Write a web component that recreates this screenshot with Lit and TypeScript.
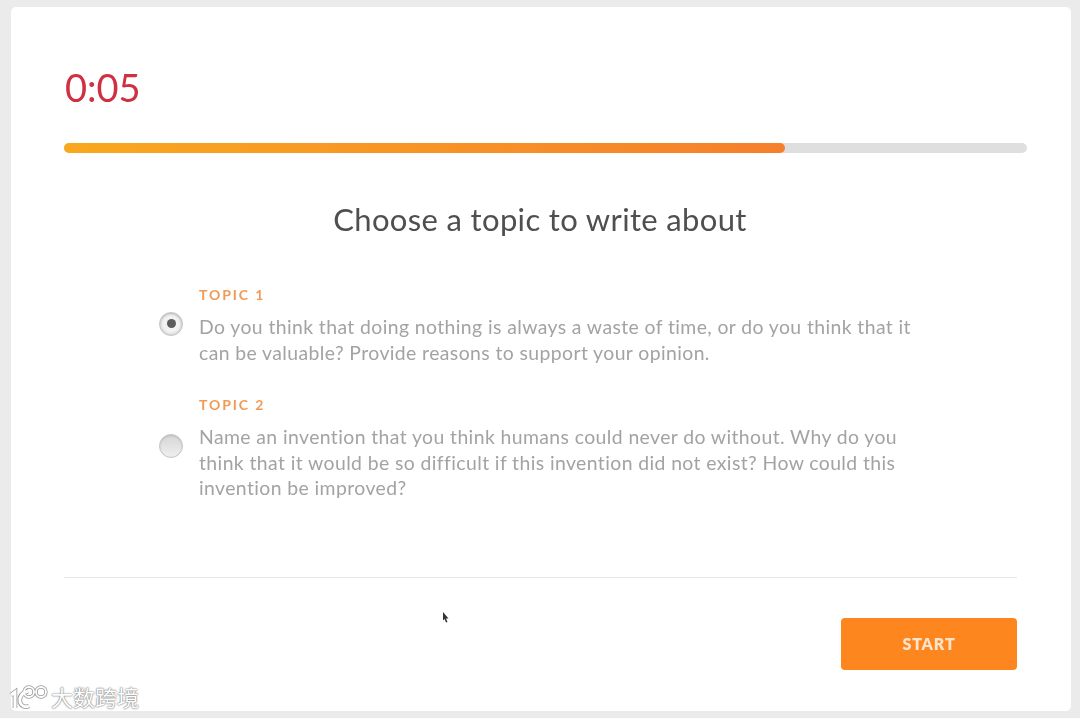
import { LitElement, html, css } from "lit";
import { customElement, property } from "lit/decorators.js";

const topics = [
	{
		label: "TOPIC 1",
		text: "Do you think that doing nothing is always a waste of time, or do you think that it can be valuable? Provide reasons to support your opinion.",
		selected: true,
	},
	{
		label: "TOPIC 2",
		text: "Name an invention that you think humans could never do without. Why do you think that it would be so difficult if this invention did not exist? How could this invention be improved?",
		selected: false,
	},
];

@customElement("topic-row")
export class TopicRow extends LitElement {
	static styles = css`
		:host {
			display: block;
		}

		.row {
			display: flex;
			align-items: center;
			gap: 16px;
		}

		.radio {
			flex: none;
			box-sizing: border-box;
			width: 24px;
			height: 24px;
			margin-bottom: 4px;
			border-radius: 50%;
			border: 1px solid #c4c4c4;
			background: linear-gradient(#d6d6d6, #efefef);
			box-shadow: inset 0 1px 2px #00000022;
			display: flex;
			align-items: center;
			justify-content: center;
		}

		.radio.on {
			background: radial-gradient(circle, #f2f2f2 0 50%, #cfcfcf 80%);
		}

		.dot {
			width: 9px;
			height: 9px;
			border-radius: 50%;
			background: #5c5c5c;
		}

		.label {
			color: #f09a55;
			font-weight: 700;
			font-size: 14px;
			line-height: 18px;
			letter-spacing: 1.9px;
			margin-bottom: 10px;
		}

		.text {
			color: #a3a3a3;
			font-size: 19.4px;
			line-height: 25.5px;
			letter-spacing: 0.4px;
			width: 716px;
		}
	`;

	@property({ type: String })
	label = "";

	@property({ type: String })
	text = "";

	@property({ type: Boolean })
	selected = false;

	render() {
		return html`
			<div class="row">
				<div class="radio ${this.selected ? "on" : ""}">
					${this.selected ? html`<div class="dot"></div>` : ""}
				</div>
				<div>
					<div class="label">${this.label}</div>
					<div class="text">${this.text}</div>
				</div>
			</div>
		`;
	}
}

@customElement("app-root")
export class AppRoot extends LitElement {
	static styles = css`
		:host {
			display: block;
			position: relative;
			width: 1080px;
			height: 718px;
			overflow: hidden;
			box-sizing: border-box;
			padding: 7px 9px 7px 11px;
			background: #ebebeb;
			font-family: Lato, "Noto Sans CJK SC", sans-serif;
		}

		.card {
			box-sizing: border-box;
			height: 704px;
			padding: 58px 44px 0 53px;
			background: #fff;
			border-radius: 5px;
			display: flex;
			flex-direction: column;
			filter: blur(0.5px);
		}

		.timer {
			color: #cf3042;
			font-size: 38px;
			line-height: 44px;
			padding-left: 1px;
		}

		.track {
			height: 10px;
			margin-top: 34px;
			border-radius: 5px;
			background: #dfdfdf;
		}

		.fill {
			height: 100%;
			border-radius: 5px;
			background: linear-gradient(90deg, #f9a81e, #f67f2b);
		}

		h1 {
			margin: 48px 0 0;
			text-align: center;
			color: #4f4f4f;
			font-size: 31px;
			line-height: 36px;
			letter-spacing: 0.35px;
			font-weight: 400;
			padding-right: 11px;
		}

		.topics {
			display: flex;
			flex-direction: column;
			gap: 31px;
			margin: 49px 0 0 95px;
		}

		.foot {
			margin: 76px 10px 0 0;
			padding-top: 40px;
			border-top: 1px solid #e8e8e8;
			display: flex;
			justify-content: flex-end;
		}

		.start {
			width: 176px;
			height: 52px;
			border: 0;
			border-radius: 4px;
			background: #fd861f;
			color: #fde3c8;
			font: 800 16px Lato, sans-serif;
			letter-spacing: 0.8px;
		}

		.cursor {
			position: absolute;
			left: 442px;
			top: 611px;
		}

		.mark {
			position: absolute;
			left: 9px;
			top: 683px;
			display: flex;
			align-items: center;
			gap: 2px;
			color: #fff;
			font-size: 22px;
			line-height: 30px;
			text-shadow: 0 0 2px #777, 0 0 1px #666;
		}

		.mark svg {
			display: block;
		}
	`;

	render() {
		return html`
			<div class="card">
				<div class="timer">0:05</div>
				<div class="track"><div class="fill" style="width: ${(721 / 963) * 100}%"></div></div>
				<h1>Choose a topic to write about</h1>
				<div class="topics">
					${topics.map(
						(t) => html`<topic-row .label=${t.label} .text=${t.text} .selected=${t.selected}></topic-row>`
					)}
				</div>
				<div class="foot"><button class="start">START</button></div>
			</div>
			<svg class="cursor" width="8" height="13" viewBox="0 0 8 13">
				<path d="M1 1l5.5 6.5H4l1.5 3.5-1.5.6L2.6 8 1 9.5z" fill="#333" />
			</svg>
			<div class="mark">
				<svg width="40" height="28" viewBox="0 0 40 28" fill="none" stroke="#fff" stroke-width="3">
					<path d="M2 11l4-3v16" stroke="#999" stroke-width="4.6" />
					<path d="M19 7c-6 2-9 6-8 11 1 4 5 6 9 4" stroke="#999" stroke-width="4.6" />
					<circle cx="20" cy="8" r="5" stroke="#999" stroke-width="3.4" />
					<circle cx="32" cy="8" r="5" stroke="#999" stroke-width="3.4" />
					<path d="M2 11l4-3v16" />
					<path d="M19 7c-6 2-9 6-8 11 1 4 5 6 9 4" />
					<circle cx="20" cy="8" r="5" stroke-width="1.8" />
					<circle cx="32" cy="8" r="5" stroke-width="1.8" />
				</svg>
				<span>大数跨境</span>
			</div>
		`;
	}
}
